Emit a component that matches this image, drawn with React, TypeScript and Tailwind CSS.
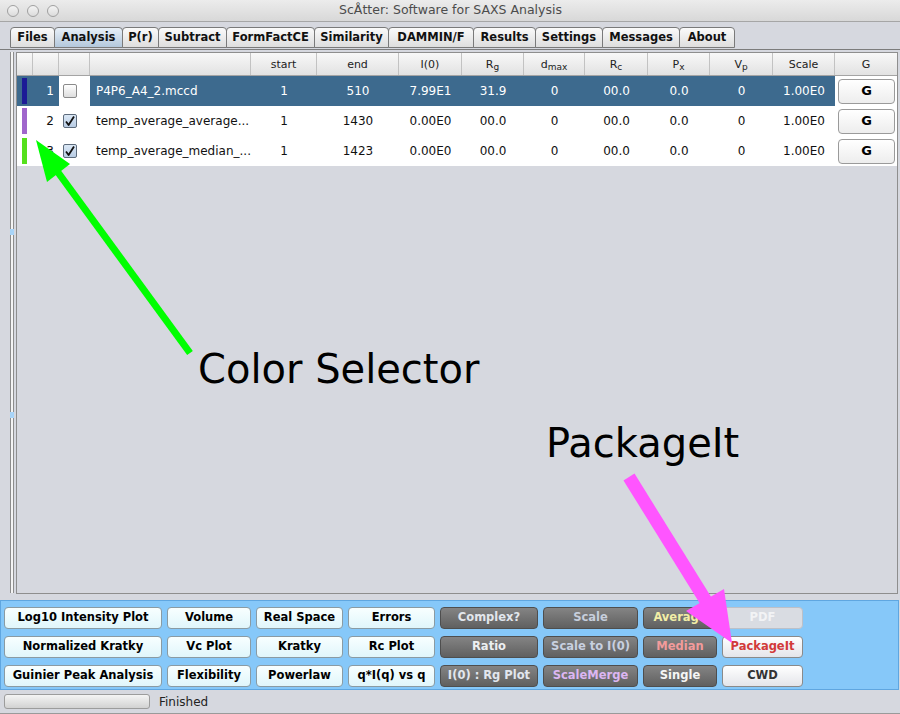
import React from 'react';

const gridCols =
    'grid grid-cols-[16px_26px_31px_161px_66px_82px_63px_62px_61px_63px_62px_63px_62px_62px]';

interface RowData {
    idx: number;
    color: string;
    checked: boolean;
    name: string;
    values: string[];
    selected?: boolean;
}

const rows: RowData[] = [
    {
        idx: 1,
        color: 'bg-[#1c1a96]',
        checked: false,
        name: 'P4P6_A4_2.mccd',
        values: ['1', '510', '7.99E1', '31.9', '0', '00.0', '0.0', '0', '1.00E0'],
        selected: true
    },
    {
        idx: 2,
        color: 'bg-[#a066cc]',
        checked: true,
        name: 'temp_average_average...',
        values: ['1', '1430', '0.00E0', '00.0', '0', '00.0', '0.0', '0', '1.00E0']
    },
    {
        idx: 3,
        color: 'bg-[#55e01c]',
        checked: true,
        name: 'temp_average_median_...',
        values: ['1', '1423', '0.00E0', '00.0', '0', '00.0', '0.0', '0', '1.00E0']
    }
];

const tabs = [
    { label: 'Files', w: 'w-[45px]' },
    { label: 'Analysis', w: 'w-[69px]', active: true },
    { label: 'P(r)', w: 'w-[37px]' },
    { label: 'Subtract', w: 'w-[69px]' },
    { label: 'FormFactCE', w: 'w-[89px]' },
    { label: 'Similarity', w: 'w-[75px]' },
    { label: 'DAMMIN/F', w: 'w-[86px]' },
    { label: 'Results', w: 'w-[63px]' },
    { label: 'Settings', w: 'w-[68px]' },
    { label: 'Messages', w: 'w-[78px]' },
    { label: 'About', w: 'w-[56px]' }
];

type Variant = 'light' | 'dark' | 'off' | 'white';

const buttons: { label: string; v: Variant; text?: string }[][] = [
    [
        { label: 'Log10 Intensity Plot', v: 'light' },
        { label: 'Volume', v: 'light' },
        { label: 'Real Space', v: 'light' },
        { label: 'Errors', v: 'light' },
        { label: 'Complex?', v: 'dark', text: 'text-[#e2e6ec]' },
        { label: 'Scale', v: 'dark', text: 'text-[#c6cedc]' },
        { label: 'Average', v: 'dark', text: 'text-[#f2eda6]' },
        { label: 'PDF', v: 'off' }
    ],
    [
        { label: 'Normalized Kratky', v: 'light' },
        { label: 'Vc Plot', v: 'light' },
        { label: 'Kratky', v: 'light' },
        { label: 'Rc Plot', v: 'light' },
        { label: 'Ratio', v: 'dark', text: 'text-[#eceff2]' },
        { label: 'Scale to I(0)', v: 'dark', text: 'text-[#c8d0e0]' },
        { label: 'Median', v: 'dark', text: 'text-[#f29b9b]' },
        { label: 'PackageIt', v: 'white', text: 'text-[#d23a3a]' }
    ],
    [
        { label: 'Guinier Peak Analysis', v: 'light' },
        { label: 'Flexibility', v: 'light' },
        { label: 'Powerlaw', v: 'light' },
        { label: 'q*I(q) vs q', v: 'light' },
        { label: 'I(0) : Rg Plot', v: 'dark', text: 'text-[#e2e6ee]' },
        { label: 'ScaleMerge', v: 'dark', text: 'text-[#dcb6f2]' },
        { label: 'Single', v: 'dark', text: 'text-[#f6f6f6]' },
        { label: 'CWD', v: 'white', text: 'text-[#333333]' }
    ]
];

const variantCls: Record<Variant, string> = {
    light: 'bg-linear-to-b from-[#f8ffff] to-[#e0f6fb] border-[#8a9ba3] text-black',
    dark: 'bg-linear-to-b from-[#848484] to-[#606060] border-[#4e4e4e]',
    off: 'bg-[#d9dce2] border-[#bcc0c8] text-[#f2f3f5]',
    white: 'bg-linear-to-b from-[#ffffff] to-[#e4e5ea] border-[#8a8a8a]'
};

const Check = ({ checked }: { checked: boolean }) =>
    checked ? (
        <div className="w-[14px] h-[14px] rounded-[2px] border border-[#5d6b7c] bg-linear-to-b from-[#dbe8f6] to-[#b8cce4] flex items-center justify-center">
            <svg width="12" height="12" viewBox="0 0 12 12">
                <path d="M2 6.5 L4.6 10 L10 1.5" fill="none" stroke="#111" strokeWidth="1.8" strokeLinejoin="round" />
            </svg>
        </div>
    ) : (
        <div className="w-[14px] h-[14px] rounded-[2px] border border-[#8a8a8a] bg-linear-to-b from-[#ffffff] to-[#dedede]" />
    );

const Sub = ({ base, sub }: { base: string; sub: string }) => (
    <span>
        {base}
        <sub className="text-[9px]">{sub}</sub>
    </span>
);

const headers: React.ReactNode[] = [
    '',
    '',
    '',
    '',
    'start',
    'end',
    'I(0)',
    <Sub base="R" sub="g" />,
    <Sub base="d" sub="max" />,
    <Sub base="R" sub="c" />,
    <Sub base="P" sub="x" />,
    <Sub base="V" sub="p" />,
    'Scale',
    'G'
];

export default function App() {
    return (
        <div className="relative w-[900px] h-[714px] overflow-hidden flex flex-col bg-[#d6d8df] font-['DejaVu_Sans',sans-serif] text-[#111]">
            {/* title bar */}
            <div className="h-[22px] shrink-0 flex items-center bg-linear-to-b from-[#ececec] to-[#d8d8d8] border-b border-[#a6a6a6] relative">
                <div className="flex gap-[8px] pl-[7px]">
                    {[0, 1, 2].map((i) => (
                        <div key={i} className="w-[12px] h-[12px] rounded-full border border-[#a0a0a0] bg-linear-to-b from-[#f4f4f4] to-[#dcdcdc]" />
                    ))}
                </div>
                <div className="flex-1 text-center text-[12.5px] text-[#4c4c4c] pr-[58px]">ScÅtter: Software for SAXS Analysis</div>
            </div>

            {/* tabs */}
            <div className="h-[28px] shrink-0 flex items-start pt-[5px] pl-[10px] border-b border-[#7c7c7c]">
                {tabs.map((t) => (
                    <div
                        key={t.label}
                        className={`${t.w} h-[21px] -ml-px first:ml-0 flex items-center justify-center border border-[#7a7a7a] rounded-t-[4px] text-[11.5px] font-bold ${
                            t.active
                                ? 'bg-linear-to-b from-[#e8f0f8] to-[#b4c8dc] relative z-10'
                                : 'bg-linear-to-b from-[#fafafa] to-[#dedede]'
                        }`}
                    >
                        {t.label}
                    </div>
                ))}
            </div>

            {/* main table area */}
            <div className="h-[550px] shrink-0 flex pt-[2px]">
                <div className="w-[16px] shrink-0 pl-[10px] flex flex-col h-[541px]">
                    <div className="w-[4px] h-[177px] border-x border-[#8c8c8c] bg-[#f4f4f4]" />
                    <div className="w-[4px] h-[6px] bg-[#a8d4f8]" />
                    <div className="w-[4px] h-[177px] border-x border-[#8c8c8c] bg-[#f4f4f4]" />
                    <div className="w-[4px] h-[6px] bg-[#a8d4f8]" />
                    <div className="w-[4px] flex-1 border-x border-[#8c8c8c] bg-[#f4f4f4]" />
                </div>
                <div className="w-[882px] h-[542px] border border-[#8e8e8e] flex flex-col">
                    <div className={`${gridCols} h-[23px] shrink-0 bg-linear-to-b from-[#f8f8f8] to-[#e2e2e2] border-b border-[#a4a4a4]`}>
                        {headers.map((h, i) => (
                            <div
                                key={i}
                                className="border-r border-[#c2c2c2] last:border-r-0 flex items-center justify-center text-[11px] text-[#222] leading-none"
                            >
                                {h}
                            </div>
                        ))}
                    </div>
                    {rows.map((r) => {
                        const bg = r.selected ? 'bg-[#3d6a8e] text-white' : 'bg-white text-[#111]';
                        return (
                            <div key={r.idx} className={`${gridCols} h-[30px] shrink-0 text-[12px]`}>
                                <div className={`${bg} flex items-center pl-[5px]`}>
                                    <div className={`w-[5px] h-[26px] ${r.color}`} />
                                </div>
                                <div className={`${bg} flex items-center justify-end pr-[5px]`}>{r.idx}</div>
                                <div className="bg-white flex items-center pl-[4px]">
                                    <Check checked={r.checked} />
                                </div>
                                <div className={`${bg} flex items-center pl-[6px] whitespace-nowrap`}>{r.name}</div>
                                {r.values.map((v, i) => (
                                    <div key={i} className={`${bg} flex items-center justify-center`}>
                                        {v}
                                    </div>
                                ))}
                                <div className="bg-white flex items-center pl-[3px]">
                                    <div className="w-[57px] h-[25px] rounded-[4px] border border-[#9a9a9a] bg-linear-to-b from-white to-[#ededed] flex items-center justify-center font-bold text-[13px] text-black">
                                        G
                                    </div>
                                </div>
                            </div>
                        );
                    })}
                </div>
            </div>

            {/* button panel */}
            <div className="h-[90px] shrink-0 w-[899px] border border-[#5fa6e0] bg-[#86c8f9] pl-[3px] pt-[6px] flex flex-col gap-[7px]">
                {buttons.map((row, ri) => (
                    <div key={ri} className="grid grid-cols-[158px_84px_87px_87px_98px_95px_74px_81px] gap-x-[5px]">
                        {row.map((b) => (
                            <div
                                key={b.label}
                                className={`h-[22px] rounded-[4px] border flex items-center justify-center text-[11.5px] font-bold whitespace-nowrap ${variantCls[b.v]} ${b.text ?? ''}`}
                            >
                                {b.label}
                            </div>
                        ))}
                    </div>
                ))}
            </div>

            {/* status bar */}
            <div className="flex-1 flex items-center border-b border-[#9a9a9a] pl-[4px] gap-[9px]">
                <div className="w-[146px] h-[15px] rounded-[3px] border border-[#9c9c9c] bg-linear-to-b from-[#f4f4f4] to-[#d2d2d2]" />
                <span className="text-[12px] text-[#222]">Finished</span>
            </div>

            {/* annotations */}
            <svg className="absolute inset-0 pointer-events-none" width="900" height="714">
                <line x1="190" y1="353" x2="57" y2="171" stroke="#00ff00" strokeWidth="7" />
                <polygon points="36,140 47,182 70,164" fill="#00ff00" />
                <line x1="629" y1="477" x2="706" y2="601" stroke="#ff55ff" strokeWidth="13" />
                <polygon points="686,611 724,589 732,643" fill="#ff55ff" />
            </svg>
            <div className="absolute left-[198px] top-[349px] text-[40px] leading-[40px] text-black whitespace-nowrap">
                Color Selector
            </div>
            <div className="absolute left-[546px] top-[423px] text-[40px] leading-[40px] text-black whitespace-nowrap">
                PackageIt
            </div>
        </div>
    );
}
